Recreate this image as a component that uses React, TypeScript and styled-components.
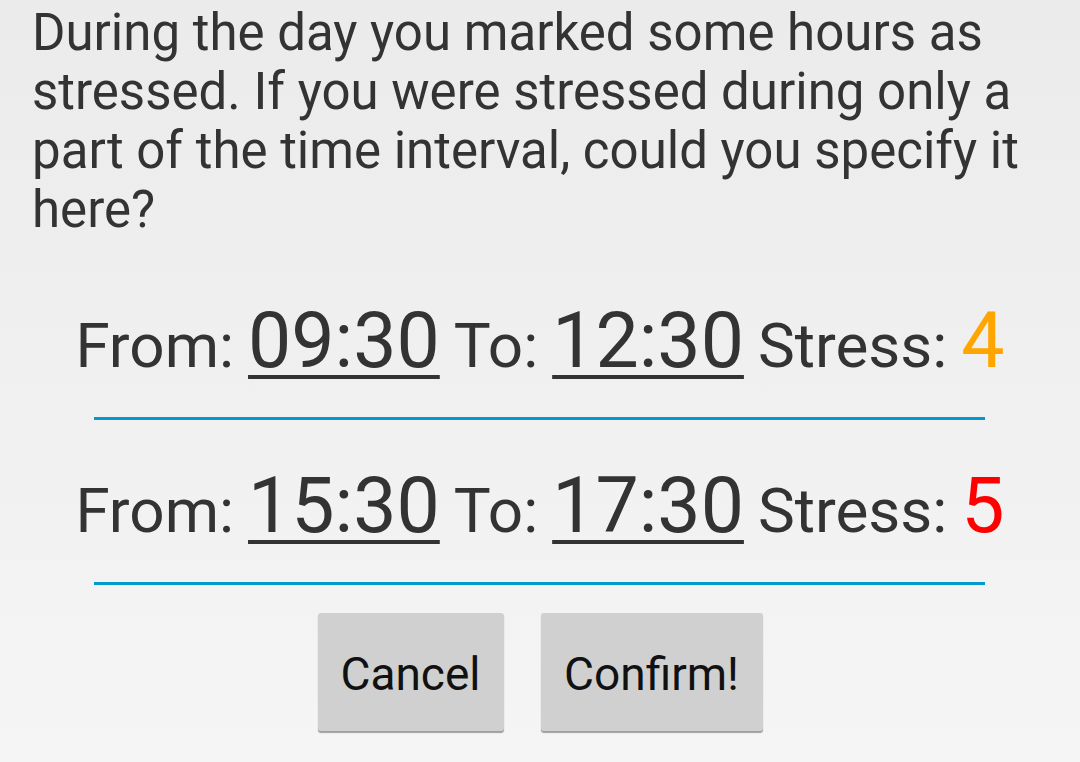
import React from "react";
import styled, { createGlobalStyle } from "styled-components";

const Global = createGlobalStyle`
  html, body { margin: 0; padding: 0; }
  body {
    width: 1080px;
    height: 762px;
    overflow: hidden;
    background: linear-gradient(180deg, #ebebeb 0%, #f5f5f5 100%);
    font-family: Roboto, "Noto Sans", sans-serif;
  }
`;

const Page = styled.div`
  display: flex;
  flex-direction: column;
  height: 762px;
`;

const Prompt = styled.p`
  margin: 0;
  padding: 3px 32px 0 32px;
  font-size: 51px;
  line-height: 59px;
  color: #333333;
`;

const Intervals = styled.div`
  display: flex;
  flex-direction: column;
  margin-top: 16px;
`;

const Interval = styled.div`
  display: flex;
  flex-direction: column;
  align-items: center;
`;

const Row = styled.div`
  display: flex;
  align-items: baseline;
  justify-content: center;
  gap: 14px;
  color: #333333;
  line-height: 90px;
  padding: 41px 0 26px;
`;

const Label = styled.span`
  font-size: 62px;
`;

const Time = styled.span`
  font-size: 77px;
  text-decoration: underline;
  text-decoration-thickness: 4px;
  text-underline-offset: 8px;
`;

const Level = styled.span<{ $color: string }>`
  font-size: 77px;
  color: ${(p) => p.$color};
`;

const Divider = styled.div`
  align-self: stretch;
  margin: 0 95px 0 94px;
  height: 3px;
  background: #0399cd;
`;

const Buttons = styled.div`
  display: flex;
  justify-content: center;
  gap: 37px;
  margin-top: 28px;
`;

const Button = styled.button<{ $w: number }>`
  width: ${(p) => p.$w}px;
  height: 118px;
  border: none;
  border-radius: 3px;
  background: #d0d0d0;
  box-shadow: 0 2px 1px rgba(0, 0, 0, 0.35);
  font-family: Roboto, "Noto Sans", sans-serif;
  font-size: 46px;
  color: #111111;
  padding: 4px 0 0;
`;

const data = [
  { from: "09:30", to: "12:30", stress: "4", color: "#ffa500" },
  { from: "15:30", to: "17:30", stress: "5", color: "#ff0000" },
];

export default function App() {
  return (
    <Page>
      <Global />
      <Prompt>
        During the day you marked some hours as stressed. If you were stressed during only a part of the time interval,
        could you specify it here?
      </Prompt>
      <Intervals>
        {data.map((d) => (
          <Interval key={d.from}>
            <Row>
              <Label>From:</Label>
              <Time>{d.from}</Time>
              <Label>To:</Label>
              <Time>{d.to}</Time>
              <Label>Stress:</Label>
              <Level $color={d.color}>{d.stress}</Level>
            </Row>
            <Divider />
          </Interval>
        ))}
      </Intervals>
      <Buttons>
        <Button $w={186}>Cancel</Button>
        <Button $w={222}>Confirm!</Button>
      </Buttons>
    </Page>
  );
}
